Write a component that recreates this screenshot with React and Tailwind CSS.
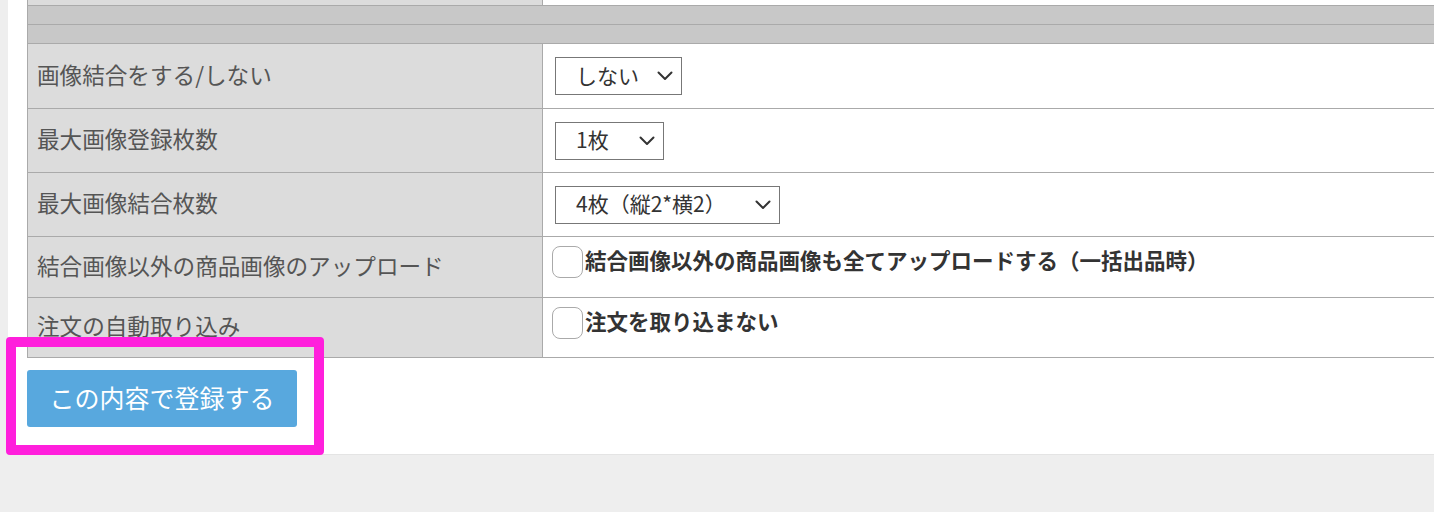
import React from 'react'

const font = { fontFamily: '"Noto Sans CJK JP", "Noto Sans", sans-serif' }

function Chevron() {
    return (
        <svg width="16" height="10" viewBox="0 0 16 10" fill="none" className="shrink-0">
            <path d="M1.5 1.5 L8 8 L14.5 1.5" stroke="#333" strokeWidth="2" strokeLinecap="round" strokeLinejoin="round" />
        </svg>
    )
}

function SelectBox({ label, width }) {
    return (
        <div className={`ml-[3px] flex items-center justify-between h-[38px] border border-[#777] bg-white pl-[20px] pr-[8px] ${width}`}>
            <span className="text-[21px] text-[#333] leading-none pb-[2px]">{label}</span>
            <Chevron />
        </div>
    )
}

function Checkbox({ text }) {
    return (
        <div className="flex items-center pt-[9px]">
            <span className="w-[31px] h-[32px] border border-[#aaa] rounded-[8px] bg-white shrink-0" />
            <span className="ml-[2px] mb-[5px] text-[21.5px] font-bold text-[#333] leading-none">{text}</span>
        </div>
    )
}

function Row({ label, height, children, top = false }) {
    return (
        <div className={`flex border-b border-[#aaa] ${height}`}>
            <div className="w-[515px] shrink-0 bg-[#dcdcdc] border-r border-[#aaa] flex items-center pl-[9px] pb-[2px]">
                <span className="text-[22.6px] text-[#555] leading-none">{label}</span>
            </div>
            <div className={`flex-1 bg-white pl-[9px] flex ${top ? 'items-start' : 'items-center'}`}>
                {children}
            </div>
        </div>
    )
}

export default function App() {
    return (
        <div className="relative min-h-[512px] bg-[#eeeeee] pl-[8px] overflow-hidden" style={font}>
            <div className="bg-white pl-[19px] pb-[27px] border-b border-[#e4e4e4]">
                <div className="w-[1420px] border-l border-[#aaa]">
                    {/* partial row cut at top */}
                    <div className="flex border-b border-[#aaa] h-[6px]">
                        <div className="w-[515px] bg-[#dcdcdc] border-r border-[#aaa]" />
                        <div className="flex-1 bg-white" />
                    </div>
                    <div className="h-[19px] bg-[#c8c8c8] border-b border-[#aaa]" />
                    <div className="h-[19px] bg-[#c8c8c8] border-b border-[#aaa]" />

                    <Row label="画像結合をする/しない" height="h-[65px]">
                        <SelectBox label="しない" width="w-[127px]" />
                    </Row>
                    <Row label="最大画像登録枚数" height="h-[64px]">
                        <SelectBox label="1枚" width="w-[109px]" />
                    </Row>
                    <Row label="最大画像結合枚数" height="h-[64px]">
                        <SelectBox label="4枚（縦2*横2）" width="w-[225px]" />
                    </Row>
                    <Row label="結合画像以外の商品画像のアップロード" height="h-[61px]" top>
                        <Checkbox text="結合画像以外の商品画像も全てアップロードする（一括出品時）" />
                    </Row>
                    <Row label="注文の自動取り込み" height="h-[60px]" top>
                        <Checkbox text="注文を取り込まない" />
                    </Row>
                </div>

                <button
                    type="button"
                    className="mt-[12px] w-[270px] h-[57px] bg-[#58a8de] rounded-[3px] text-white text-[25px] leading-none pb-[3px]"
                >
                    この内容で登録する
                </button>
            </div>

            {/* highlight annotation */}
            <div className="absolute left-[6px] top-[337px] w-[318px] h-[118px] border-[10px] border-[#ff1fdc] rounded-[4px] pointer-events-none" />
        </div>
    )
}
